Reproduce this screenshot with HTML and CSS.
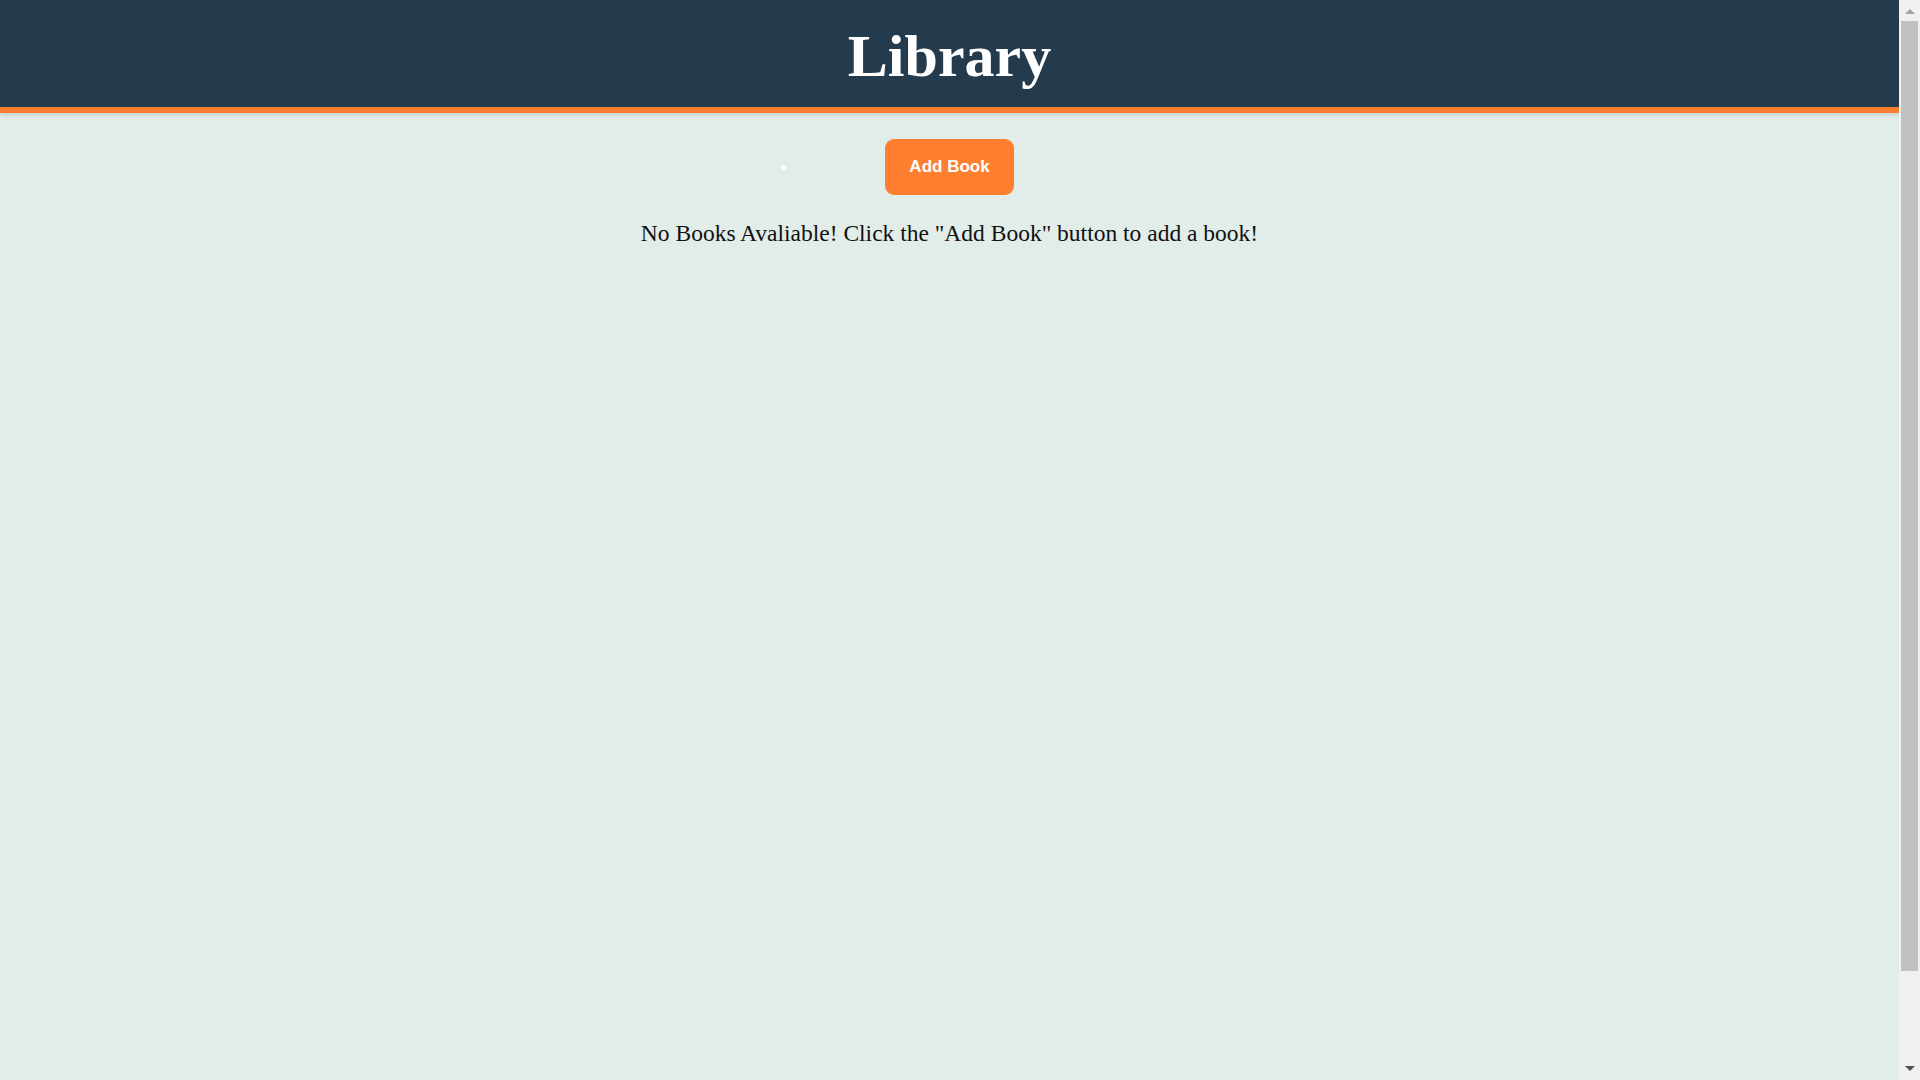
FILE: index.html
```html
<!DOCTYPE html>
<html lang="en">
<head>
<meta charset="utf-8">
<title>Library</title>
<link rel="stylesheet" href="styles.css">
</head>
<body>
  <div class="page">
    <header class="site-header">
      <h1 class="site-title">Library</h1>
    </header>
    <main class="content">
      <div class="toolbar">
        <span class="dot"></span>
        <button class="add-btn" type="button">Add Book</button>
      </div>
      <p class="empty-msg">No Books Avaliable! Click the "Add Book" button to add a book!</p>
    </main>
  </div>
  <div class="scrollbar" aria-hidden="true">
    <span class="sb-arrow sb-up"></span>
    <span class="sb-thumb"></span>
    <span class="sb-arrow sb-down"></span>
  </div>
</body>
</html>
```

FILE: styles.css
```css
html, body {
  margin: 0;
  padding: 0;
}

html::-webkit-scrollbar {
  display: none;
}

body {
  background: #e2ece8;
  font-family: "Liberation Serif", "Times New Roman", serif;
  color: #111;
}

.page {
  margin-right: 21px;
}

.site-header {
  background: #243b4e;
  border-bottom: 6px solid #fe7f2f;
  height: 107px;
  display: flex;
  align-items: center;
  justify-content: center;
  box-shadow: 0 2px 4px rgba(0, 0, 0, 0.12);
}

.site-title {
  margin: 0;
  padding-top: 4px;
  color: #ffffff;
  font-size: 60px;
  font-weight: 700;
  line-height: 1;
}

.content {
  min-height: 100vh;
  display: flex;
  flex-direction: column;
  align-items: center;
  padding-top: 26px;
  box-sizing: border-box;
}

.toolbar {
  position: relative;
  display: flex;
  justify-content: center;
}

.dot {
  position: absolute;
  left: -104px;
  top: 26px;
  width: 5px;
  height: 5px;
  border-radius: 50%;
  background: #ffffff;
}

.add-btn {
  background: #fe7f2f;
  color: #ffffff;
  border: none;
  border-radius: 9px;
  width: 129px;
  height: 56px;
  font-family: "Liberation Sans", Arial, sans-serif;
  font-size: 17px;
  font-weight: 700;
  padding: 0;
  cursor: pointer;
}

.empty-msg {
  margin: 23px 0 0;
  font-size: 23.5px;
  line-height: 1.3;
  color: #111111;
}

/* simulated classic browser scrollbar */
.scrollbar {
  position: fixed;
  top: 0;
  right: 0;
  width: 21px;
  height: 100vh;
  background: #f1f1f1;
  display: flex;
  flex-direction: column;
  align-items: center;
}

.sb-arrow {
  width: 0;
  height: 0;
  border-left: 5px solid transparent;
  border-right: 5px solid transparent;
}

.sb-up {
  margin-top: 9px;
  border-bottom: 5px solid #a3a3a3;
}

.sb-thumb {
  margin-top: 7px;
  width: 17px;
  height: 950px;
  background: #c1c1c1;
}

.sb-down {
  margin-top: auto;
  margin-bottom: 9px;
  border-top: 5px solid #505050;
}
```
